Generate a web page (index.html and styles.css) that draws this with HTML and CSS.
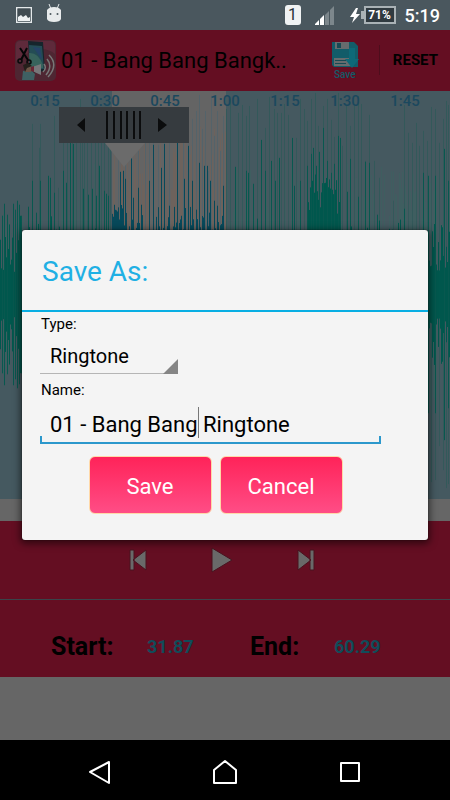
FILE: index.html
```html
<!DOCTYPE html>
<html lang="en">
<head>
    <meta charset="UTF-8">
    <meta name="viewport" content="width=device-width, initial-scale=1.0">
    <title>Ringtone Maker</title>
    <link rel="stylesheet" href="styles.css">
</head>
<body>

    <!-- Phone status bar -->
    <div class="status-bar">
        <svg width="16" height="16" viewBox="0 0 16 16"><path fill="#e4e8ea" fill-rule="evenodd" d="M0 0h16v16H0zM1.500 1.500v13h13v-13z"/><path fill="#414c52" d="M1.500 1.500h13v13h-13z"/><path fill="#eef1f2" d="M2 14v-4l3-2 2 2 3-2 2 3 2-1v4z"/></svg>
        <svg class="robot" width="16" height="18" viewBox="0 0 16 18"><path stroke="#e4e8ea" stroke-width="1" d="M3 0l2 5M13 0l-2 5"/><path fill="#e8ebec" d="M1 6q2-3 7-3t7 3v9q-1 3-7 3t-7-3z"/><circle cx="4.500" cy="10" r="1" fill="#4b575d"/><circle cx="11.500" cy="10" r="1" fill="#4b575d"/></svg>
        <span class="sim">1</span>
        <svg class="signal" width="19" height="19" viewBox="0 0 19 19"><path fill="#fff" d="M0 19v-1l4-4v5zM5 19v-6l4-4v10z"/><path fill="#7d878c" d="M10 19V9l4-4v14zM15 19V4l4-4v19z"/></svg>
        <svg class="bolt" width="10" height="15" viewBox="0 0 10 15"><path fill="#fff" d="M6 0L0 9h4l-2 6 8-9H6l2-6z"/></svg>
        <span class="battery">71%</span>
        <span class="clock">5:19</span>
    </div>

    <div class="app">
        <!-- Title bar -->
        <header class="toolbar">
            <svg class="logo" width="41" height="41" viewBox="0 0 41 41">
                <rect width="41" height="41" rx="5" fill="#4e2632"/>
                <path fill="#5e2a3b" d="M1 5q0-4 4-4h31q4 0 4 4v9Q25 2 1 21z"/>
                <path fill="#16252c" d="M13 1l15 1 2 29-15 2z"/>
                <path fill="#244c55" d="M14 5l13 1 2 23-14 1z"/>
                <path fill="#37635c" d="M14 13q9-1 14 12v3l-13 1z"/>
                <path fill="#254468" d="M18 7l7 1 2 12z"/>
                <path fill="none" stroke="#050607" stroke-width="2" d="M5 8l8 12M12 8L6 20"/>
                <g fill="none" stroke="#08090a" stroke-width="1.500"><circle cx="5" cy="21" r="2"/><circle cx="14" cy="22" r="2"/></g>
                <path fill="#3f6063" d="M8 31l7-2 5 5-1 6H7z"/>
                <path fill="#6c5547" d="M10 26h6v6h-6z"/>
                <path fill="#251f1b" d="M8 25l5-2 4 3-5 2-2 4z"/>
                <path fill="#77777a" d="M17 27l9-3v11l-9-4z"/>
                <path fill="#6b2534" d="M16 27l3-1v6l-3-1z"/>
                <g fill="none" stroke="#777" stroke-width="1.500"><path d="M29 24q3 4-1 8M32 19q6 7-1 16M34 15q10 10-1 22"/></g>
            </svg>
            <h1 class="title">01 - Bang Bang Bangk..</h1>
            <button class="save-tool" type="button">
                <svg width="28" height="28" viewBox="0 0 28 28">
                    <path fill="#125c69" d="M1 1h22l4 4v21H3l-2-2z"/>
                    <path fill="#666c6e" d="M4 1h14v7H4zM3 17h18v8H3z"/>
                    <path fill="#174a54" d="M6 2h4v5H6zM4 19h11v1H4zM4 22h11v1H4z"/>
                    <path fill="#0d6978" d="M18 7h6v11h4l-7 9-7-9h4z"/>
                </svg>
                Save
            </button>
            <button class="reset" type="button">RESET</button>
        </header>

        <!-- Waveform with time scale -->
        <section class="wave">
            <svg class="wave-lines" viewBox="0 0 450 409" preserveAspectRatio="none">
                <rect width="450" height="409" fill="#455960"/>
                <rect x="112" width="114" height="409" fill="#646464"/>
                <g id="lines"></g>
            </svg>
            <div class="times">
                <span>0:15</span><span>0:30</span><span>0:45</span><span>1:00</span><span>1:15</span><span>1:30</span><span>1:45</span>
            </div>
            <svg class="handle" width="130" height="60" viewBox="0 0 130 60">
                <path fill="#6b6b6b" d="M46 36h40L65 60z"/>
                <path fill="#363b3f" d="M0 0h130v36H0z"/>
                <path fill="#0b0c0d" d="M18 18l8-7v14zM108 18l-9-7v14z"/>
                <path stroke="#0b0c0d" stroke-width="2" d="M48 4v28M55 4v28M62 4v28M68 4v28M75 4v28M81 4v28"/>
            </svg>
        </section>

        <!-- Player buttons -->
        <section class="player">
            <button type="button" aria-label="Previous"><svg width="18" height="22" viewBox="0 0 18 22"><path fill="#696969" stroke="#48131f" d="M1 1h4v20H1zM4 11L17 1v20z"/></svg></button>
            <button type="button" aria-label="Play"><svg width="22" height="26" viewBox="0 0 22 26"><path fill="#696969" stroke="#48131f" d="M1 1l20 12L1 25z"/></svg></button>
            <button type="button" aria-label="Next"><svg width="18" height="22" viewBox="0 0 18 22"><path fill="#696969" stroke="#48131f" d="M13 1h4v20h-4zM1 1l13 10L1 21z"/></svg></button>
        </section>

        <section class="range">
            <label for="start">Start:</label>
            <input id="start" type="text" value="31.87">
            <label for="end">End:</label>
            <input id="end" type="text" value="60.29">
        </section>

        <!-- Save dialog -->
        <div class="overlay">
            <form class="dialog" role="dialog" aria-labelledby="dialog-title">
                <h2 id="dialog-title">Save As:</h2>
                <div class="dialog-body">
                    <label for="type">Type:</label>
                    <div class="select-box">
                        <select id="type">
                            <option>Ringtone</option>
                        </select>
                    </div>
                    <label for="name">Name:</label>
                    <div class="name-box">
                        <input id="name" type="text" value="01 - Bang Bang Ringtone">
                        <span class="caret"></span>
                    </div>
                    <div class="buttons">
                        <button type="button">Save</button>
                        <button type="button">Cancel</button>
                    </div>
                </div>
            </form>
        </div>
    </div>

    <!-- Android navigation -->
    <nav class="nav-bar">
        <button type="button" aria-label="Back"><svg width="26" height="26" viewBox="0 0 26 26"><path d="M22 3v21L3 13z"/></svg></button>
        <button type="button" aria-label="Home"><svg width="26" height="26" viewBox="0 0 26 26"><path d="M2 24V11L13 2l11 9v13z"/></svg></button>
        <button type="button" aria-label="Recent apps"><svg width="26" height="26" viewBox="0 0 26 26"><path d="M4 4h18v18H4z"/></svg></button>
    </nav>

    <script src="wave.js"></script>
</body>
</html>
```

FILE: styles.css
```css
* {
    box-sizing: border-box;
}
body {
    font-family: Roboto, "Liberation Sans", sans-serif;
    background-color: #666;
    margin: 0;
    min-height: 100vh;
    display: flex;
    flex-direction: column;
    color: #000;
}
button,
input,
select {
    font-family: inherit;
    border: none;
    background: none;
    padding: 0;
    margin: 0;
    outline: none;
}
svg {
    display: block;
    flex-shrink: 0;
}

/* Status bar */
.status-bar {
    display: flex;
    align-items: center;
    height: 30px;
    padding: 0 10px 0 16px;
    background-color: #4a575e;
    color: #fff;
}
.robot {
    margin-left: 14px;
    margin-bottom: 4px;
}
.sim {
    margin-left: auto;
    width: 16px;
    height: 20px;
    line-height: 20px;
    border-radius: 3px;
    background-color: #f0f2f3;
    color: #263238;
    font-size: 16px;
    text-align: center;
}
.signal {
    margin-left: 14px;
}
.bolt {
    margin-left: 16px;
}
.battery {
    position: relative;
    margin-left: 4px;
    width: 32px;
    height: 18px;
    line-height: 14px;
    border: 2px solid #aab2b6;
    background-color: #303a40;
    font-size: 12px;
    font-weight: bold;
    text-align: center;
}
.battery::before {
    content: "";
    position: absolute;
    left: -5px;
    top: 3px;
    width: 3px;
    height: 8px;
    background-color: #aab2b6;
}
.clock {
    margin-left: 9px;
    font-size: 18px;
    font-weight: 500;
}

/* Title bar */
.app {
    position: relative;
    flex: 1;
}
.toolbar {
    display: flex;
    align-items: center;
    height: 60px;
    padding: 0 12px 0 15px;
    background-color: #640e22;
}
.title {
    flex: 1;
    margin: 0 0 0 5px;
    font-size: 22px;
    font-weight: normal;
    line-height: 24px;
    padding-top: 2px;
    white-space: nowrap;
}
.save-tool {
    display: flex;
    flex-direction: column;
    align-items: center;
    margin-right: 20px;
    color: #125c69;
    font-size: 10px;
    font-weight: 500;
    line-height: 11px;
}
.reset {
    height: 30px;
    padding-left: 13px;
    border-left: 1px solid #4d0d1c;
    color: #000;
    font-size: 15px;
    font-weight: bold;
}

/* Waveform */
.wave {
    position: relative;
    margin-bottom: 22px;
    border-top: 1px solid #640e22;
}
.wave-lines {
    width: 100%;
    height: 408px;
}
.times {
    position: absolute;
    top: 0;
    left: 0;
    right: 0;
    display: grid;
    grid-template-columns: repeat(7, 1fr);
    padding: 0 15px;
    color: #1b485e;
    font-size: 15px;
    font-weight: 500;
    line-height: 20px;
    text-align: center;
}
.handle {
    position: absolute;
    left: 13%;
    top: 16px;
}

/* Player */
.player {
    display: flex;
    justify-content: center;
    gap: 28px;
    height: 79px;
    padding-right: 6px;
    background-color: #640e22;
    border-bottom: 1px solid #3a444a;
}
.player button {
    display: flex;
    align-items: center;
    justify-content: center;
    width: 56px;
}
.range {
    display: grid;
    grid-template-columns: 96fr 103fr 84fr 116fr;
    align-items: center;
    height: 77px;
    padding: 16px 0 0 51px;
    background-color: #640e22;
    font-weight: bold;
}
.range label {
    font-size: 25px;
}
.range input {
    width: 100%;
    color: #104c5a;
    font-size: 18px;
    font-weight: bold;
}

/* Save dialog */
.overlay {
    position: absolute;
    inset: 0;
    display: flex;
    align-items: center;
    padding: 0 22px;
}
.dialog {
    width: 100%;
    background-color: #f4f4f4;
    border-radius: 3px;
    box-shadow: 0 0 1px 0 #000, 0 2px 7px 2px rgba(0, 0, 0, 0.5);
}
.dialog h2 {
    margin: 0;
    padding: 4px 20px 0;
    border-bottom: 2px solid #08aee3;
    color: #1fb0e4;
    font-size: 28px;
    font-weight: normal;
    line-height: 76px;
}
.dialog-body {
    padding: 3px 47px 26px 18px;
}
.dialog-body label {
    display: block;
    padding-left: 1px;
    font-size: 15px;
    line-height: 18px;
}
.select-box {
    position: relative;
    width: 138px;
    margin-bottom: 7px;
}
.select-box::after {
    content: "";
    position: absolute;
    right: 0;
    bottom: 0;
    border-left: 15px solid transparent;
    border-bottom: 15px solid #858585;
}
.select-box select {
    display: block;
    appearance: none;
    width: 100%;
    height: 41px;
    padding: 6px 10px 0;
    border-bottom: 1px solid #b5b5b5;
    color: #000;
    font-size: 20px;
}
.name-box {
    position: relative;
}
.name-box::after {
    content: "";
    position: absolute;
    left: 0;
    right: 0;
    bottom: 0;
    height: 6px;
    border: 2px solid #2c98cc;
    border-top: none;
}
.name-box input {
    width: 100%;
    height: 45px;
    padding: 6px 10px 0;
    color: #000;
    font-size: 22px;
}
.caret {
    position: absolute;
    left: 158px;
    top: 8px;
    width: 1px;
    height: 31px;
    background-color: #777;
}
.buttons {
    display: flex;
    justify-content: center;
    gap: 8px;
    margin-top: 12px;
    padding-left: 10px;
}
.buttons button {
    width: 123px;
    height: 58px;
    padding-top: 2px;
    border: 1px solid #ffd9a8;
    border-radius: 6px;
    background: linear-gradient(#ff2359, #ff4d86);
    color: #fff;
    font-size: 22px;
}

/* Navigation bar */
.nav-bar {
    display: flex;
    justify-content: center;
    gap: 99px;
    height: 60px;
    padding-top: 4px;
    background-color: #000;
}
.nav-bar path {
    fill: none;
    stroke: #fff;
    stroke-width: 2;
    stroke-linejoin: round;
}
```

FILE: wave.js
```javascript
const middle = 204;
const selStart = 112;
const selEnd = 226;

// Tallest samples as [x, distance from the top]
const softPeaks = [
    [32, 33], [40, 33], [54, 25], [80, 8], [39, 57], [58, 97], [63, 52], [67, 52], [70, 52], [72, 52], [76, 52],
    [82, 52], [84, 52], [87, 52], [91, 52], [95, 52], [98, 52], [101, 52], [104, 52], [108, 52], [110, 52],
    [118, 60], [125, 60], [131, 60], [138, 60], [145, 45], [149, 50], [153, 48], [158, 54], [164, 50], [169, 52],
    [177, 48], [183, 50], [188, 40], [192, 28], [196, 20], [199, 4], [202, 38], [205, 20], [208, 80], [211, 5], [214, 45],
    [217, 20], [220, 60], [223, 25], [226, 18], [230, 8], [235, 80], [238, 22], [242, 14], [246, 25], [249, 15], [257, 8],
    [261, 50], [265, 37], [269, 6], [274, 18], [277, 22], [281, 22], [284, 13], [288, 24], [292, 55], [296, 47], [300, 8],
    [304, 18], [307, 30], [311, 8], [315, 2], [318, 35], [323, 15], [327, 8], [331, 29], [334, 46], [338, 2],
    [342, 55], [346, 15], [350, 35], [354, 13], [358, 5], [361, 13], [365, 70], [369, 24], [374, 70], [379, 87],
    [393, 110], [404, 14], [408, 42], [412, 52], [416, 32], [419, 55], [423, 40], [427, 50], [431, 16],
    [435, 18], [439, 52], [443, 28], [446, 10], [448, 14]
];
const strongPeaks = [
    [2, 125], [4, 113], [7, 124], [13, 113], [15, 119], [17, 110], [19, 114], [21, 125], [28, 116], [32, 90], [36, 122], [40, 90],
    [48, 85], [50, 87], [54, 102], [63, 80], [66, 92], [70, 52], [73, 53], [83, 98], [88, 104], [92, 98], [96, 105], [99, 75],
    [104, 100], [106, 103], [108, 105], [120, 81], [123, 80], [125, 88], [131, 45], [133, 107], [138, 97], [141, 114],
    [149, 90], [153, 54], [161, 77], [164, 53], [169, 115], [177, 52], [184, 88], [188, 55], [192, 90], [199, 72], [204, 75],
    [207, 75], [210, 90], [214, 110], [217, 115], [223, 95], [235, 76], [246, 80], [248, 82], [253, 93], [261, 49],
    [265, 80], [271, 70], [275, 90], [279, 67], [292, 47], [294, 95], [300, 90], [307, 75], [311, 63], [313, 57], [316, 75],
    [319, 61], [323, 37], [327, 70], [331, 82], [334, 73], [338, 45], [340, 47], [347, 101], [350, 68], [358, 106],
    [365, 71], [369, 72], [377, 124], [404, 118], [423, 82], [428, 85], [435, 85], [444, 58], [448, 90]
];

// Repeatable noise for the small samples between the peaks
let seed = 17;
function noise() {
    seed = (seed * 1103515245 + 12345) % 2147483648;
    return seed / 2147483648;
}

function path(d, color) {
    const el = document.createElementNS('http://www.w3.org/2000/svg', 'path');
    el.setAttribute('d', d);
    el.setAttribute('stroke', color);
    document.getElementById('lines').appendChild(el);
}

function draw(peaks, green, blue) {
    let outside = '';
    let inside = '';
    peaks.forEach(([x, top]) => {
        const line = `M${x + 0.5} ${top}V${middle * 2 - top}`;
        if (x >= selStart && x < selEnd) {
            inside += line;
        } else {
            outside += line;
        }
    });
    path(outside, green);
    path(inside, blue);
}

const softSmall = [];
const warmSmall = [];
const strongSmall = [];
for (let x = 0; x < 450; x++) {
    const n = noise();
    if (x >= selStart && x < selEnd) {
        if (n > 0.45) warmSmall.push([x, 35 + noise() * 70]);
        strongSmall.push([x, x < 123 ? 112 + noise() * 22 : 115 + noise() * 55]);
    } else if (x > 306 && x < 341) {
        strongSmall.push([x, 82 + noise() * 42]);
    } else {
        if (n > 0.5) softSmall.push([x, (x < 60 ? 118 : 72) + noise() * 75]);
        strongSmall.push([x, 120 + Math.pow(noise(), 0.5) * 62]);
    }
}

draw(softSmall, '#3f5e60', '#3f5e60');
draw(warmSmall, '#6d625c', '#6d625c');
draw(softPeaks, '#33595a', '#54636a');
draw(strongSmall, '#00574d', '#07495a');
draw(strongPeaks, '#08584f', '#07495a');
```
